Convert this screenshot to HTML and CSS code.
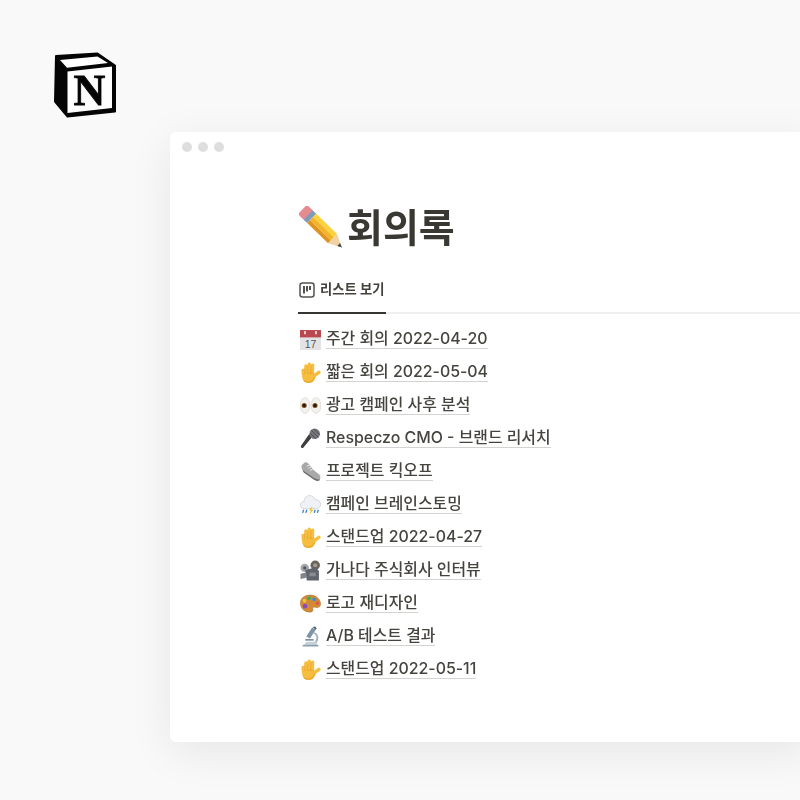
FILE: index.html
```html
<!DOCTYPE html>
<html lang="ko">
<head>
<meta charset="utf-8">
<title>회의록</title>
<link rel="stylesheet" href="styles.css">
</head>
<body>
<svg width="0" height="0" class="defs">
  <symbol id="hand" viewBox="0 0 20 20">
    <g fill="none" stroke="#f7bd3e" stroke-linecap="round">
      <path d="M3.200 12 2.800 8" stroke-width="3"/>
      <path d="M5.800 12 5.600 3.800" stroke-width="3.200"/>
      <path d="M8.800 12 8.800 2" stroke-width="3.200"/>
      <path d="M11.800 12 12 3" stroke-width="3.200"/>
      <path d="M12.500 14 18 9.800" stroke-width="3.200"/>
    </g>
    <ellipse cx="8.300" cy="14" rx="6.300" ry="6" fill="#f7bd3e"/>
    <path d="M7.200 3v8M10.300 3v8M4.200 6l.4 5.500M13 11.500c-1.500-1-3.500-1-5-.2" fill="none" stroke="#dc9a26" stroke-width=".5"/>
    <path d="M3.500 17.500c2 2.400 6.300 2.400 8.500 0 1-1.200 1.600-2.200 2.500-3.200" fill="none" stroke="#e8a52f" stroke-width="1"/>
  </symbol>
</svg>

<div class="logo">
  <svg width="70" height="70" viewBox="50 50 70 70">
    <path d="M56 56 97.500 53.500 115 65.500V111.500L67.500 116.500 55 101.500Z" fill="#050505" stroke="#050505" stroke-width="2" stroke-linejoin="round"/>
    <path d="M60 60 97.500 56.500 108 63 67 67.800Z" fill="#fff"/>
    <path d="M67.500 71.500 112 66.500V108L67.500 113Z" fill="#fff"/>
    <text x="89.500" y="105" class="logo-n" text-anchor="middle">N</text>
  </svg>
</div>

<main class="window">
  <div class="dots"><span class="dot"></span><span class="dot"></span><span class="dot"></span></div>
  <div class="doc">
    <h1 class="title">
      <svg class="title-icon" width="44" height="44" viewBox="0 0 44 44">
        <g transform="translate(6.500 5.500) rotate(44)">
          <rect x="-3" y="-6.500" width="10" height="13" rx="3" fill="#e58a8f"/>
          <rect x="5" y="-6.500" width="5" height="13" fill="#7f9bb8"/>
          <rect x="10" y="-6.500" width="29" height="4.500" fill="#fbd23c"/>
          <rect x="10" y="-2" width="29" height="4.500" fill="#f3b32a"/>
          <rect x="10" y="2.500" width="29" height="4" fill="#dd9420"/>
          <path d="M39-6.500 52 0 39 6.500Z" fill="#f0d2a4"/>
          <path d="M47.500-2 52 0 47.500 2Z" fill="#44484d"/>
        </g>
      </svg>
      <span>회의록</span>
    </h1>

    <div class="tabs">
      <div class="tab">
        <svg width="16" height="16" viewBox="0 0 16 16">
          <rect x="1" y="1" width="14" height="14" rx="2.500" fill="none" stroke="#55534e" stroke-width="1.500"/>
          <rect x="4" y="4" width="2" height="7.500" fill="#55534e"/>
          <rect x="7" y="4" width="2" height="5.500" fill="#55534e"/>
          <rect x="10" y="4" width="2" height="4" fill="#55534e"/>
        </svg>
        <span>리스트 보기</span>
      </div>
    </div>

    <ul class="list">
      <li class="row">
        <svg class="icon" viewBox="0 0 20 20">
          <rect x="0" y="1" width="20" height="19" fill="#e3e3e5"/>
          <rect x="0" y="1" width="20" height="7" fill="#b8474f"/>
          <rect x="4" y="2" width="1.500" height="3" fill="#eee"/>
          <rect x="14.500" y="2" width="1.500" height="3" fill="#eee"/>
          <text x="10" y="18" class="cal" text-anchor="middle">17</text>
        </svg>
        <span class="link">주간 회의 2022-04-20</span>
      </li>
      <li class="row">
        <svg class="icon"><use href="#hand"/></svg>
        <span class="link">짧은 회의 2022-05-04</span>
      </li>
      <li class="row">
        <svg class="icon" viewBox="0 0 20 20">
          <ellipse cx="4.800" cy="10" rx="4.700" ry="7.500" fill="#f3f1ee" stroke="#cfcac4" stroke-width=".5"/>
          <ellipse cx="15.200" cy="10" rx="4.700" ry="7.500" fill="#f3f1ee" stroke="#cfcac4" stroke-width=".5"/>
          <circle cx="4" cy="10" r="2.400" fill="#7a4a18"/>
          <circle cx="14.300" cy="10" r="2.400" fill="#7a4a18"/>
          <circle cx="4" cy="10" r="1.300" fill="#111"/>
          <circle cx="14.300" cy="10" r="1.300" fill="#111"/>
        </svg>
        <span class="link">광고 캠페인 사후 분석</span>
      </li>
      <li class="row">
        <svg class="icon" viewBox="0 0 20 20">
          <path d="M11.500 8.500 8.800 5.800 1 17c-.4.600-.2 1.300.3 1.700s1.200.6 1.800.2Z" fill="#3e3e42"/>
          <circle cx="14" cy="5.500" r="5" fill="#77777c"/>
          <path d="M10.500 2l7 7M13 .8l6 6M9.500 5l5.500 5" stroke="#3c3c40" stroke-width=".7"/>
        </svg>
        <span class="link">Respeczo CMO - 브랜드 리서치</span>
      </li>
      <li class="row">
        <svg class="icon" viewBox="0 0 20 20">
          <path d="M1.500 4 5 1 7.500 2 13 8.500 18.500 13c1.300 1.200 1.300 4.500-.5 5.200-1.500.5-3.500-.5-5-1.500L3.500 10.500 1.500 7Z" fill="#a9a9a9"/>
          <path d="M2.300 8.500 3.500 11 13 17.500c1.500 1 3.500 1.800 5 1.300.6-.2 1-.8 1.200-1.500-2 .7-4.700-.3-6.200-1.300Z" fill="#6e6e6e"/>
          <path d="M6.500 5 9.500 3.500M8 7 11 5.500M9.500 9 12.500 7.500" stroke="#ececec" stroke-width=".9"/>
        </svg>
        <span class="link">프로젝트 킥오프</span>
      </li>
      <li class="row">
        <svg class="icon" viewBox="0 0 20 20">
          <path d="M4.500 14C2 14 .3 12.500.3 10.500S2 7.200 3.700 7.300C4.100 3.700 6.300 1.500 9.200 1.500c2.500 0 4.500 1.600 5.100 3.800 2.800-.3 5.400 1.700 5.400 4.500S17.500 14 15 14Z" fill="#eef1f5" stroke="#b6bec8" stroke-width=".5"/>
          <path d="M10.800 12.500 8.500 15.800H10.300L9 19.500 12.800 15H10.700L12 12.500Z" fill="#f4bd2d"/>
          <path d="M3.500 15 2.500 18M6.500 15 5.500 18M14.500 15 13.500 18M17.500 15 16.500 18" stroke="#3f87d8" stroke-width="1.300"/>
        </svg>
        <span class="link">캠페인 브레인스토밍</span>
      </li>
      <li class="row">
        <svg class="icon"><use href="#hand"/></svg>
        <span class="link">스탠드업 2022-04-27</span>
      </li>
      <li class="row">
        <svg class="icon" viewBox="0 0 20 20">
          <circle cx="14.500" cy="5" r="4.500" fill="#6a625c"/>
          <circle cx="14.500" cy="5" r="2" fill="#a49a91"/>
          <circle cx="4.500" cy="7.500" r="4" fill="#a3a7ac"/>
          <circle cx="4.500" cy="7.500" r="1.600" fill="#52565b"/>
          <path d="M5 9.500 15 7 18 10.500V19.500H6.500Z" fill="#60656c"/>
          <path d="M.5 13 6 12V17L.5 18Z" fill="#80858b"/>
          <rect x="9" y="12" width="6" height="3.500" fill="#888d91"/>
        </svg>
        <span class="link">가나다 주식회사 인터뷰</span>
      </li>
      <li class="row">
        <svg class="icon" viewBox="0 0 20 20">
          <path d="M.4 9C.8 4.300 5.500 1.500 10.500 2c5.500.5 9.400 4.500 9 9-.3 2.800-3 3.300-5 2.600-1.700-.6-2.900.3-2.300 1.800.6 1.600-.8 3-3 2.800C3.500 18 0 13.800.4 9Z" fill="#d38a35" stroke="#a9671f" stroke-width=".5"/>
          <circle cx="8.500" cy="5" r="2" fill="#46a85a"/>
          <circle cx="13.500" cy="6" r="1.800" fill="#3c8ed8"/>
          <circle cx="16.500" cy="9.800" r="1.600" fill="#e0564f"/>
          <circle cx="4.300" cy="7.300" r="1.900" fill="#e8c53a"/>
          <circle cx="4.800" cy="12.500" r="2.200" fill="#8a4bc2"/>
        </svg>
        <span class="link">로고 재디자인</span>
      </li>
      <li class="row">
        <svg class="icon" viewBox="0 0 20 20">
          <path d="M11.500 1.500 15 3.500 9.500 12 6 10Z" fill="#7f94a8"/>
          <path d="M12 1 14.500 .5 16 2.500 14.800 3.500Z" fill="#4f5f6e"/>
          <path d="M13.500 6.500c3.500 1.500 4 6 1.500 9" fill="none" stroke="#9fb2c2" stroke-width="1.800"/>
          <rect x="5" y="12.500" width="8" height="1.400" fill="#6f8090"/>
          <path d="M6 15h9l2 3.500H3.500Z" fill="#c5d0da"/>
          <rect x="2.500" y="18" width="15" height="1.500" fill="#8c9cab"/>
        </svg>
        <span class="link">A/B 테스트 결과</span>
      </li>
      <li class="row">
        <svg class="icon"><use href="#hand"/></svg>
        <span class="link">스탠드업 2022-05-11</span>
      </li>
    </ul>
  </div>
</main>
</body>
</html>
```

FILE: styles.css
```css
html, body {
  margin: 0;
  padding: 0;
}

body {
  width: 800px;
  height: 800px;
  overflow: hidden;
  background: #f9f9f9;
  font-family: "Inter", "Noto Sans CJK KR", sans-serif;
  color: #37352f;
}

.defs {
  display: block;
  height: 0;
}

.logo {
  padding: 50px 0 0 50px;
  height: 70px;
  line-height: 0;
  filter: blur(0.4px);
}

.logo-n {
  font-family: "Liberation Serif", serif;
  font-weight: 700;
  font-size: 44px;
  fill: #050505;
  stroke: #050505;
  stroke-width: 0.8px;
}

.window {
  box-sizing: border-box;
  width: 640px;
  height: 610px;
  margin: 12px 0 0 170px;
  background: #fff;
  border-radius: 6px 0 0 6px;
  box-shadow: 0 10px 44px rgba(15, 15, 15, 0.08);
  padding: 10px 0 0 12px;
}

.dots {
  display: flex;
  gap: 6px;
}

.dot {
  width: 10px;
  height: 10px;
  border-radius: 50%;
  background: #dedede;
}

.doc {
  margin-left: 116px;
  padding-top: 51px;
  filter: blur(0.35px);
}

.title {
  display: flex;
  align-items: center;
  gap: 5px;
  margin: 0;
  height: 50px;
  font-size: 39px;
  font-weight: 600;
  line-height: 50px;
  color: #3a3833;
}

.title-icon {
  flex: none;
}

.tabs {
  margin-top: 18px;
  border-bottom: 2px solid #efefef;
  display: flex;
  height: 41px;
}

.tab {
  display: flex;
  align-items: flex-start;
  gap: 5px;
  box-sizing: border-box;
  height: 43px;
  width: 88px;
  border-bottom: 2px solid #37352f;
  padding: 11px 0 0 1px;
  font-size: 13.3px;
  font-weight: 600;
  line-height: 15px;
  color: #44423d;
}

.tab svg {
  flex: none;
}

.list {
  list-style: none;
  margin: 9px 0 0;
  padding: 0;
}

.row {
  display: flex;
  align-items: center;
  gap: 5px;
  height: 33px;
  font-size: 15.9px;
  font-weight: 500;
  color: #46443f;
}

.icon {
  flex: none;
  width: 21px;
  height: 21px;
  margin-left: 2px;
}

.link {
  line-height: 18px;
  border-bottom: 1px solid #d4d3d1;
}

.cal {
  font-family: "Liberation Sans", sans-serif;
  font-size: 10px;
  fill: #555;
}
```
